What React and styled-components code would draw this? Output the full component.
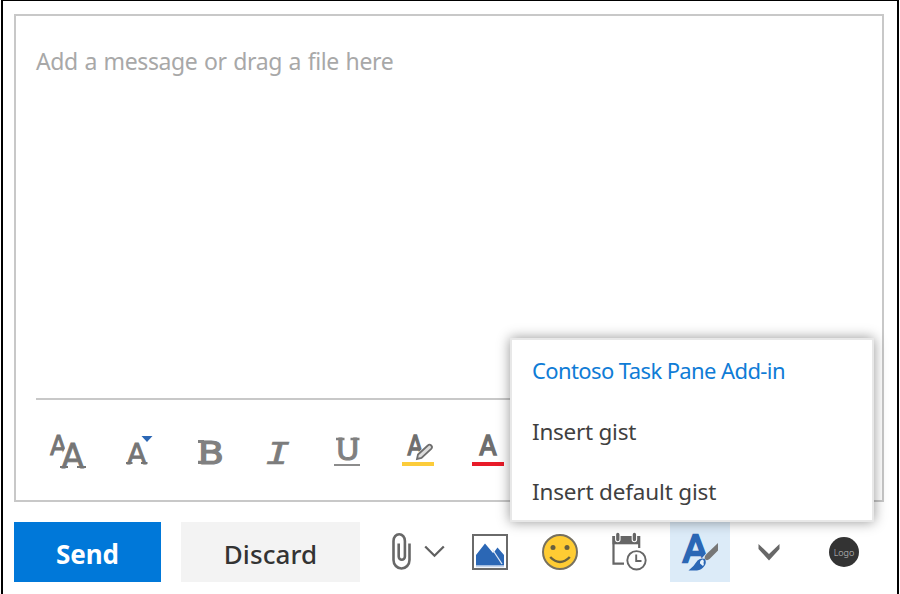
import React from "react";
import styled, { createGlobalStyle } from "styled-components";

const GlobalStyle = createGlobalStyle`
  * { box-sizing: border-box; }
  html, body { margin: 0; background: #fff; overflow: hidden; }
  body, button { font-family: "Noto Sans", "Open Sans", sans-serif; }
`;

const Frame = styled.main`
  position: relative;
  width: 898px;
  height: 594px;
  margin: 0 1px;
  padding: 13px 11px 0;
  border: solid #000;
  border-width: 1px 2px 0;
  background: #fff;
  overflow: hidden;
`;

const Editor = styled.section`
  display: flex;
  flex-direction: column;
  width: 870px;
  height: 488px;
  padding: 0 20px;
  border: 2px solid #c8c8c8;
`;

const Message = styled.div`
  height: 384px;
  padding-top: 28px;
  border-bottom: 2px solid #c8c8c8;
`;

const Placeholder = styled.p`
  margin: 0;
  font-size: 23px;
  line-height: 34px;
  letter-spacing: ${(p) => p.$spacing};
  word-spacing: 1px;
  white-space: nowrap;
  color: #a8a8a8;
`;

const FormatBar = styled.div`
  display: flex;
  gap: 34px;
  margin-top: 33px;
  padding-left: 14px;
`;

const IconButton = styled.button`
  display: flex;
  flex: none;
  align-items: center;
  justify-content: center;
  width: ${(p) => p.$width || 36}px;
  height: ${(p) => p.$height || 36}px;
  margin-left: ${(p) => p.$gap || 0}px;
  padding: 0;
  border: 0;
  background: ${(p) => (p.$active ? "#dcebf8" : "transparent")};
`;

const Glyph = styled.svg`
  display: block;
  flex: none;
  width: ${(p) => p.$w || 36}px;
  height: ${(p) => p.$h || 36}px;
  fill: none;
  stroke: none;
  overflow: visible;
`;

const Letter = styled.text`
  font-family: "DejaVu Sans", sans-serif;
  font-weight: ${(p) => p.$weight || 400};
  font-size: ${(p) => p.$size}px;
  fill: ${(p) => p.$color || "#757575"};
  stroke: ${(p) => p.$color || "#757575"};
  stroke-width: ${(p) => p.$stroke || 0};
`;

const Mono = styled.text`
  font-family: "DejaVu Sans Mono", monospace;
  font-style: oblique;
  font-size: ${(p) => p.$size}px;
  fill: #7c7c7c;
`;

const Actions = styled.div`
  display: flex;
  align-items: center;
  height: 60px;
  margin-top: 20px;
`;

const ActionButton = styled.button`
  flex: none;
  width: ${(p) => p.$width}px;
  height: 60px;
  margin-right: 20px;
  padding: 4px 0 0;
  border: 0;
  background: ${(p) => (p.$primary ? "#0078d9" : "#f3f3f3")};
  color: ${(p) => (p.$primary ? "#fff" : "#333")};
  font-size: 26px;
  font-weight: ${(p) => (p.$primary ? 700 : 500)};
  letter-spacing: ${(p) => p.$spacing};
`;

const Logo = styled.div`
  display: flex;
  align-items: center;
  justify-content: center;
  flex: none;
  width: 30px;
  height: 30px;
  margin-left: 49px;
  border-radius: 50%;
  background: #333;
  color: #c4c4c4;
  font-size: 9px;
  font-weight: 300;
`;

const Menu = styled.div`
  position: absolute;
  left: 507px;
  top: 337px;
  width: 364px;
  height: 184px;
  padding: 2px 20px 0;
  border: 2px solid #e8e8e8;
  background: #fff;
  box-shadow: 0 0 12px rgba(0, 0, 0, 0.42);
`;

const MenuItem = styled.div`
  height: 60px;
  line-height: ${(p) => (p.$title ? 57 : 60)}px;
  font-size: ${(p) => (p.$title ? 22 : 22.5)}px;
  letter-spacing: ${(p) => p.$spacing};
  white-space: nowrap;
  color: ${(p) => (p.$title ? "#0f7cd6" : "#404040")};
`;

const FontIcon = () => (
  <Glyph viewBox="0 0 36 36">
    <Letter $size={27} $stroke={0.9} x="0" y="21.5" textLength="17" lengthAdjust="spacingAndGlyphs">A</Letter>
    <path d="M12.500 20L19 8h7l3 8-16 12z" fill="#fff" />
    <Letter $size={34} $stroke={0.8} x="11.5" y="34.5" textLength="22.500" lengthAdjust="spacingAndGlyphs">A</Letter>
    <path d="M10 34h8M27 34H36" stroke="#757575" strokeWidth="2" />
  </Glyph>
);

const FontSizeIcon = () => (
  <Glyph viewBox="0 0 36 36">
    <Letter $size={29} $stroke={0.9} x="7" y="30.500" textLength="19.500" lengthAdjust="spacingAndGlyphs">A</Letter>
    <path d="M6 30h6.500M21 30h6.500" stroke="#757575" strokeWidth="2" />
    <path d="M21.500 3h11L27 9z" fill="#2b67b5" />
  </Glyph>
);

const BoldIcon = () => (
  <Glyph viewBox="0 0 36 36">
    <Letter $size={32} $stroke={1.2} x="8" y="30.500" textLength="26" lengthAdjust="spacingAndGlyphs" $color="#808080">B</Letter>
    <path d="M8 8.500h6M8 29.300h6" stroke="#808080" strokeWidth="3.200" />
  </Glyph>
);

const ItalicIcon = () => (
  <Glyph viewBox="0 0 36 36">
    <Mono $size={30.500} x="6" y="30.500" textLength="24" lengthAdjust="spacingAndGlyphs" stroke="#7c7c7c" strokeWidth=".6">I</Mono>
  </Glyph>
);

const UnderlineIcon = () => (
  <Glyph viewBox="0 0 36 36">
    <Letter $size={30} $stroke={0.9} x="6" y="27" textLength="23.500" lengthAdjust="spacingAndGlyphs" $color="#808080">U</Letter>
    <path d="M6 6h8.500M20.500 6H29.500" stroke="#808080" strokeWidth="2.600" />
    <path d="M4 32h26" stroke="#8c8c8c" strokeWidth="2" />
  </Glyph>
);

const HighlightIcon = () => (
  <Glyph viewBox="0 0 36 36">
    <Letter $size={26} $stroke={1.3} $color="#6e6e6e" x="7.500" y="22" textLength="15.500" lengthAdjust="spacingAndGlyphs">A</Letter>
    <path d="M17 26l1-4.500L27.800 12.500a2.400 2.400 0 0 1 3.400 3.400L21.500 25z" stroke="#fff" strokeWidth="2.600" />
    <path d="M17 26l1-4.500L27.800 12.500a2.400 2.400 0 0 1 3.400 3.400L21.500 25z" fill="#ddd" stroke="#6e6e6e" strokeWidth="1.800" />
    <path d="M2 31h32" stroke="#fccc3a" strokeWidth="4" />
  </Glyph>
);

const ColorIcon = () => (
  <Glyph viewBox="0 0 36 36">
    <Letter $size={26} $stroke={1.5} $color="#6e6e6e" x="9.500" y="22" textLength="17" lengthAdjust="spacingAndGlyphs">A</Letter>
    <path d="M2 31h32" stroke="#e81b29" strokeWidth="4" />
  </Glyph>
);

const ClipIcon = () => (
  <Glyph $w={22} $h={40} viewBox="391 532 22 40">
    <path d="M409.500 543.500V560a8 8.500 0 0 1-16 0V541a5.700 6.800 0 0 1 11.400 0V556.500a3.100 3.300 0 0 1-6.200 0V543.500" stroke="#686868" strokeWidth="2.600" />
  </Glyph>
);

const ThinChevron = () => (
  <Glyph $w={20} $h={12} viewBox="0 0 20 12">
    <path d="M.2 .5l9.300 9.200L18.800 .5" stroke="#606060" strokeWidth="2.300" />
  </Glyph>
);

const PictureIcon = () => (
  <Glyph viewBox="0 0 36 36">
    <path d="M1 1h34v34H1z" fill="#fff" stroke="#6a6a6a" strokeWidth="2" />
    <path d="M4 31.500V21l9-11.500L21 19l1.500-1.500 3-4L32 21v10.500z" fill="#2b67b5" />
    <path d="M4 32.500h28" stroke="#c5d5ec" strokeWidth="1.500" />
    <path d="M20.500 15.500L30 30" stroke="#dfe8f5" strokeWidth="1.300" />
  </Glyph>
);

const SmileIcon = () => (
  <Glyph viewBox="0 0 36 36">
    <circle cx="18" cy="18" r="17" fill="#fc3" stroke="#77715f" strokeWidth="2" />
    <circle cx="11" cy="13.500" r="2.500" fill="#68603f" />
    <circle cx="25" cy="13.500" r="2.500" fill="#68603f" />
    <path d="M8.200 23q9.800 10 19.600 0" stroke="#68603f" strokeWidth="2.500" />
  </Glyph>
);

const CalendarIcon = () => (
  <Glyph $w={38} $h={40} viewBox="611 534 38 40">
    <path d="M613.500 538v27.700H624M639.200 538v12" stroke="#666" strokeWidth="2.200" />
    <path d="M612.500 538H640v8.300h-27.500z" fill="#666" />
    <path d="M617.800 535.500v6M634.400 535.500v6" stroke="#fff" strokeWidth="5.500" strokeLinecap="round" />
    <path d="M617.800 536.500v5M634.400 536.500v5" stroke="#666" strokeWidth="3.300" strokeLinecap="round" />
    <circle cx="636.500" cy="562.300" r="9.200" fill="#fff" stroke="#666" strokeWidth="1.900" />
    <path d="M636.200 556.500v6.500h5.300" stroke="#666" strokeWidth="1.900" />
  </Glyph>
);

const AddInIcon = () => (
  <Glyph viewBox="0 0 36 36">
    <Letter $size={38} $stroke={2.4} $color="#2b67b5" x="1" y="28" textLength="25" lengthAdjust="spacingAndGlyphs">A</Letter>
    <path d="M36 7.500L24 19.500 20 24l-8 5-2 7h16l10-14z" fill="#dcebf8" />
    <path d="M36 9v7.500l-8.500 8.500q-3 2.500-5-.5 0-3 2-4.500z" fill="#777" />
    <path d="M15.500 26.500q3.500-3 7.500-1.500 2 4-1 7.500-2.500 3.500-7 4H6.500q5-3.500 9-10z" fill="#2b67b5" />
    <path d="M18 29.500q-.5-3.500 3-4 1.500 1.500.5 3.500 1 1.500-.5 3z" fill="#e8f3fc" />
  </Glyph>
);

const ThickChevron = () => (
  <Glyph $w={22} $h={17} viewBox="0 0 22 17">
    <path d="M.5 0L11 10 21.500 0v5L11 16.500.5 5z" fill="#686868" />
  </Glyph>
);

const formatIcons = [
  ["Font", FontIcon],
  ["Font size", FontSizeIcon],
  ["Bold", BoldIcon],
  ["Italic", ItalicIcon],
  ["Underline", UnderlineIcon],
  ["Highlight", HighlightIcon],
  ["Font color", ColorIcon],
];

export default function App() {
  return (
    <>
      <GlobalStyle />
      <Frame>
        <Editor>
          <Message>
            <Placeholder $spacing="-0.38px">Add a message or drag a file here</Placeholder>
          </Message>
          <FormatBar>
            {formatIcons.map(([label, Icon]) => (
              <IconButton key={label} aria-label={label}><Icon /></IconButton>
            ))}
          </FormatBar>
        </Editor>
        <Actions>
          <ActionButton $primary $width={147} $spacing="-0.1px">Send</ActionButton>
          <ActionButton $width={179} $spacing="0.1px">Discard</ActionButton>
          <IconButton aria-label="Attach" $width={22} $height={40} $gap={11}><ClipIcon /></IconButton>
          <IconButton aria-label="Attach options" $width={20} $height={20} $gap={12}><ThinChevron /></IconButton>
          <IconButton aria-label="Insert picture" $gap={27}><PictureIcon /></IconButton>
          <IconButton aria-label="Emoji" $gap={34}><SmileIcon /></IconButton>
          <IconButton aria-label="Schedule" $width={38} $height={36} $gap={33}><CalendarIcon /></IconButton>
          <IconButton aria-label="Add-ins" $active $width={60} $height={60} $gap={21}><AddInIcon /></IconButton>
          <IconButton aria-label="More" $width={22} $gap={28}><ThickChevron /></IconButton>
          <Logo>Logo</Logo>
        </Actions>
        <Menu>
          <MenuItem $title $spacing="-0.6px">Contoso Task Pane Add-in</MenuItem>
          <MenuItem $spacing="-0.25px">Insert gist</MenuItem>
          <MenuItem $spacing="-0.17px">Insert default gist</MenuItem>
        </Menu>
      </Frame>
    </>
  );
}
